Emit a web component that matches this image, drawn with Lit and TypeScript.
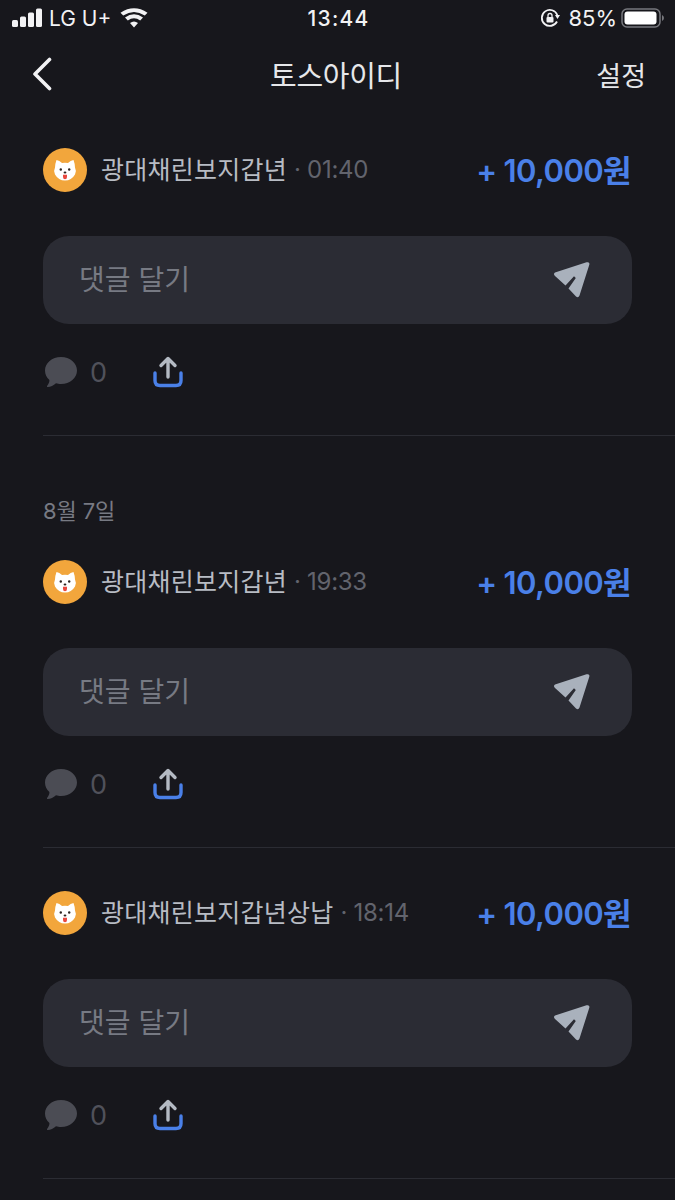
import { LitElement, css, html } from 'lit';
import { customElement, property } from 'lit/decorators.js';

const avatar = html`
  <svg class="avatar" viewBox="0 0 44 44">
    <circle cx="22" cy="22" r="22" fill="#f2a63c"></circle>
    <path d="M13.500 12 Q16.500 12.500 19 15 Q22 14.400 25 15 Q27.500 12.500 30.500 12 Q32 16 32 19.500 Q33.800 23 32 26.500 Q28.500 32.500 22 32.500 Q15.500 32.500 12 26.500 Q10.200 23 12 19.500 Q12 16 13.500 12 Z" fill="#fff"></path>
    <circle cx="17.800" cy="21.500" r="1.200" fill="#2b2320"></circle>
    <circle cx="26.200" cy="21.500" r="1.200" fill="#2b2320"></circle>
    <ellipse cx="22" cy="24.500" rx="1.400" ry="1" fill="#2b2320"></ellipse>
    <path d="M20 26.800 H24 V29 Q24 31.300 22 31.300 Q20 31.300 20 29 Z" fill="#e8483f"></path>
  </svg>
`;

const sendIcon = html`
  <svg class="send" viewBox="0 0 38 38">
    <path d="M2 11.500 L33.500 1.300 Q37 0.500 36.300 3.800 L26.500 34.500 Q25.300 37.500 23 35.500 L15.500 27.500 L22.800 17 L21 15.300 L12.500 24.500 L2 15 Q0 12.800 2 11.500 Z" fill="#a9b1bc"></path>
  </svg>
`;

const commentIcon = html`
  <svg class="comment" viewBox="0 0 34 32">
    <path d="M17 1 C26 1 33 7 33 14.500 C33 22 26 28 17 28 C15 28 13.500 27.800 12 27.300 C9.500 29.500 6.500 31 3.800 31 C3 31 2.700 30.300 3.200 29.700 C4.800 27.800 5.500 25.800 5.400 24 C2.600 21.500 1 18.200 1 14.500 C1 7 8 1 17 1 Z" fill="#4b4c54"></path>
  </svg>
`;

const shareIcon = html`
  <svg class="share" viewBox="0 0 30 32">
    <path d="M15 21 V3 M8 9.500 L15 2.500 L22 9.500" fill="none" stroke="#b4bac3" stroke-width="3.400" stroke-linecap="round" stroke-linejoin="round"></path>
    <path d="M2 17 V24.500 Q2 29.500 7 29.500 H23 Q28 29.500 28 24.500 V17" fill="none" stroke="#4a80e8" stroke-width="3.400" stroke-linecap="round"></path>
  </svg>
`;

@customElement('feed-item')
export class FeedItem extends LitElement {
  static styles = css`
    :host {
      display: block;
      margin-left: 43px;
      border-bottom: 1px solid #2b2c33;
    }
    .row {
      display: flex;
      align-items: center;
      height: 44px;
      padding-right: 44px;
      line-height: 44px;
    }
    .avatar {
      width: 44px;
      height: 44px;
      margin-right: 14px;
      flex: none;
    }
    .name {
      font-size: 25px;
      color: #b8bcc4;
      letter-spacing: 0.25px;
    }
    .time {
      font-size: 24px;
      color: #62646d;
      margin-left: 7px;
      letter-spacing: -0.3px;
      flex: 1;
    }
    .amount {
      font-size: 31px;
      font-weight: 600;
      color: #4a80e8;
      letter-spacing: -0.6px;
      margin-top: 2px;
    }
    .input {
      display: flex;
      align-items: center;
      justify-content: space-between;
      box-sizing: border-box;
      width: 589px;
      height: 88px;
      margin-top: 44px;
      padding: 0 41px 0 36px;
      border-radius: 26px;
      background: #2b2c34;
      color: #777a83;
      font-size: 28px;
      line-height: 84px;
    }
    .send {
      width: 38px;
      height: 38px;
    }
    .actions {
      display: flex;
      align-items: center;
      height: 40px;
      margin: 28px 0 43px;
    }
    .comment {
      width: 34px;
      height: 32px;
      margin: 0 0 0 1px;
    }
    .count {
      font-size: 27px;
      color: #50515a;
      margin-left: 12px;
      width: 63px;
    }
    .share {
      width: 30px;
      height: 32px;
    }
  `;

  @property() name = '';
  @property() time = '';

  render() {
    return html`
      <div class="row">
        ${avatar}
        <span class="name">${this.name}</span>
        <span class="time">· ${this.time}</span>
        <span class="amount">+ 10,000원</span>
      </div>
      <div class="input">
        <span>댓글 달기</span>
        ${sendIcon}
      </div>
      <div class="actions">
        ${commentIcon}
        <span class="count">0</span>
        ${shareIcon}
      </div>
    `;
  }
}

@customElement('app-root')
export class AppRoot extends LitElement {
  static styles = css`
    :host {
      display: block;
      height: 1200px;
      overflow: hidden;
      background: #17171c;
      color: #fff;
      font-family: 'Inter', 'Noto Sans CJK KR', sans-serif;
    }
    .status {
      display: grid;
      grid-template-columns: 1fr auto 1fr;
      align-items: center;
      height: 36px;
      padding: 0 10px 0 12px;
      font-size: 21px;
      color: #f2f2f4;
    }
    .status .left,
    .status .right {
      display: flex;
      align-items: center;
    }
    .status .right {
      justify-content: flex-end;
      font-size: 22px;
    }
    .status .clock {
      font-size: 21px;
      font-weight: 500;
      letter-spacing: 1.2px;
    }
    .signal {
      width: 31px;
      height: 20px;
      margin-right: 6px;
    }
    .wifi {
      width: 28px;
      height: 20px;
      margin-left: 9px;
    }
    .lock {
      width: 20px;
      height: 20px;
      margin-right: 8px;
    }
    .battery {
      width: 44px;
      height: 22px;
      margin-left: 4px;
    }
    .nav {
      display: grid;
      grid-template-columns: 1fr auto 1fr;
      align-items: center;
      height: 76px;
      padding: 0 29px 0 32px;
      font-size: 29px;
      color: #e6e7ea;
    }
    .back {
      width: 20px;
      height: 34px;
    }
    .title {
      letter-spacing: -0.3px;
      margin-right: 6px;
    }
    .settings {
      justify-self: end;
      font-size: 27px;
    }
    .feed {
      padding-top: 36px;
    }
    .date {
      margin: 63px 0 37px 43px;
      height: 24px;
      line-height: 24px;
      font-size: 22px;
      color: #777a83;
      letter-spacing: -0.1px;
    }
    .feed feed-item + feed-item {
      padding-top: 43px;
    }
  `;

  render() {
    return html`
      <div class="status">
        <div class="left">
          <svg class="signal" viewBox="0 0 31 20">
            <rect x="0" y="12" width="6" height="7" rx="1.500" fill="#f2f2f4"></rect>
            <rect x="8" y="8.500" width="6" height="10.500" rx="1.500" fill="#f2f2f4"></rect>
            <rect x="16" y="4.500" width="6" height="14.500" rx="1.500" fill="#f2f2f4"></rect>
            <rect x="24" y="0.500" width="6" height="18.500" rx="1.500" fill="#f2f2f4"></rect>
          </svg>
          <span>LG U+</span>
          <svg class="wifi" viewBox="0 0 28 20">
            <path d="M14 19.500 L10 15 Q14 12 18 15 Z M7.800 12.500 L5 9.500 Q14 3 23 9.500 L20.200 12.500 Q14 8 7.800 12.500 Z M3.200 7.500 L0.500 4.700 Q14 -4 27.500 4.700 L24.800 7.500 Q14 0.500 3.200 7.500 Z" fill="#f2f2f4"></path>
          </svg>
        </div>
        <span class="clock">13:44</span>
        <div class="right">
          <svg class="lock" viewBox="0 0 20 20">
            <path d="M17 13.500 A8 8 0 1 1 17.300 7" fill="none" stroke="#f2f2f4" stroke-width="1.800"></path>
            <path d="M15 7 L20 7 L17.500 11 Z" fill="#f2f2f4"></path>
            <rect x="6.500" y="9" width="7" height="5.500" rx="1" fill="#f2f2f4"></rect>
            <path d="M8 9 V7.500 A2 2 0 0 1 12 7.500 V9" fill="none" stroke="#f2f2f4" stroke-width="1.300"></path>
          </svg>
          <span>85%</span>
          <svg class="battery" viewBox="0 0 44 22">
            <rect x="1" y="2" width="38" height="18" rx="5" fill="none" stroke="#77787d" stroke-width="1.500"></rect>
            <rect x="3.500" y="4.500" width="32" height="13" rx="3" fill="#fff"></rect>
            <path d="M41 8 Q43 9 43 11 Q43 13 41 14 Z" fill="#77787d"></path>
          </svg>
        </div>
      </div>
      <div class="nav">
        <svg class="back" viewBox="0 0 20 34">
          <path d="M17.500 2.500 L3 17 L17.500 31.500" fill="none" stroke="#f2f2f4" stroke-width="3.600" stroke-linecap="round" stroke-linejoin="round"></path>
        </svg>
        <span class="title">토스아이디</span>
        <span class="settings">설정</span>
      </div>
      <div class="feed">
        <feed-item name="광대채린보지갑년" time="01:40"></feed-item>
        <div class="date">8월 7일</div>
        <feed-item name="광대채린보지갑년" time="19:33"></feed-item>
        <feed-item name="광대채린보지갑년상납" time="18:14"></feed-item>
      </div>
    `;
  }
}
